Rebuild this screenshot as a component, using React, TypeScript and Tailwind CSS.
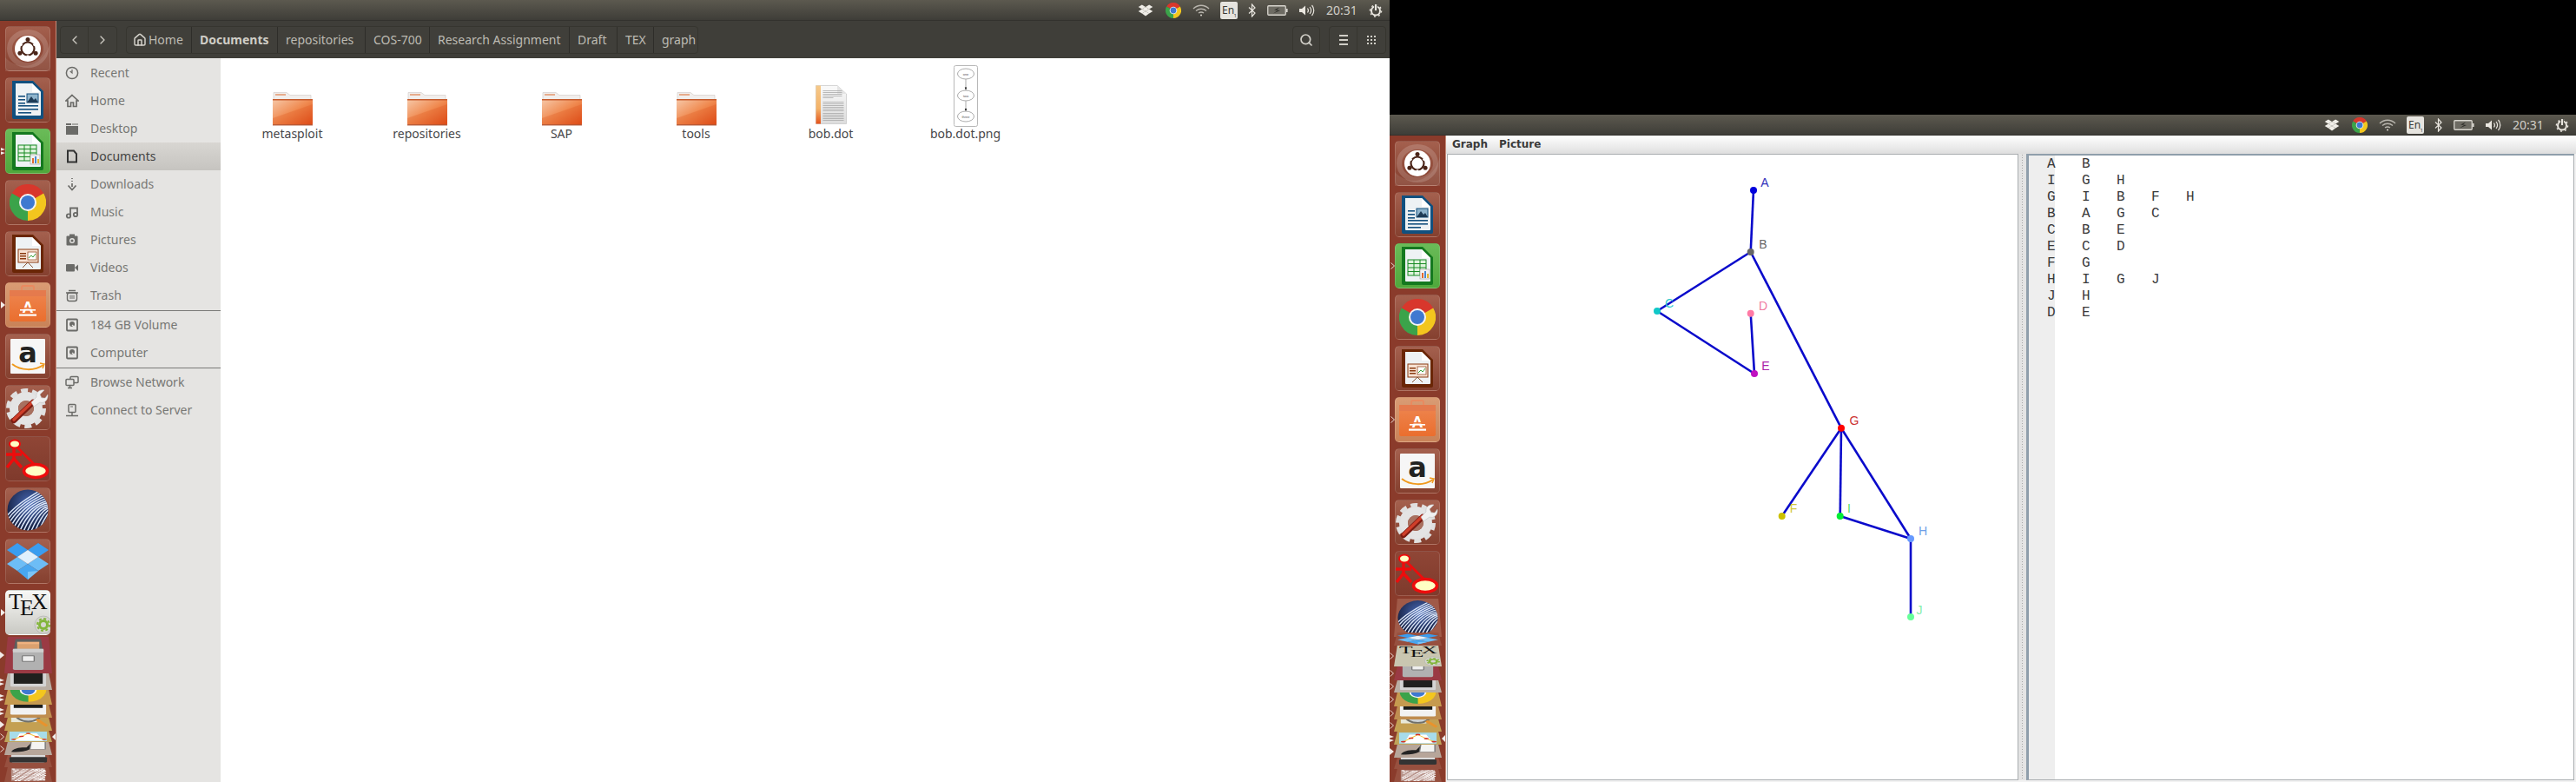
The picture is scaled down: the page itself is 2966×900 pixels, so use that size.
import React from "react";
import { ChevronLeft, ChevronRight, Home, Search } from "lucide-react";

const UI = "font-['Noto_Sans','Open_Sans',sans-serif]";

/* ---------- small shared drawings ---------- */
function ChromeLogo({ size = 42 }: { size?: number }) {
  return (
    <svg width={size} height={size} viewBox="0 0 42 42" className="block">
      <path d="M21 21 L2.8 10.5 A21 21 0 0 1 39.2 10.5Z" fill="#d8372c" />
      <path d="M21 21 L39.2 10.5 A21 21 0 0 1 21 42Z" fill="#f3c61e" />
      <path d="M21 21 L21 42 A21 21 0 0 1 2.8 10.5Z" fill="#3ba34a" />
      <circle cx="21" cy="21" r="10" fill="#f4f4f4" />
      <circle cx="21" cy="21" r="8" fill="#3f79d0" />
    </svg>
  );
}

function Diamonds({ light }: { light?: boolean }) {
  const a = light ? "#f0eee8" : "#3a9df0";
  const b = light ? "#f0eee8" : "#6dbdf6";
  const c = light ? "#f0eee8" : "#48a6f0";
  return (
    <>
      <polygon points="14,5 26,13 14,21 2,13" fill={a} />
      <polygon points="38,5 50,13 38,21 26,13" fill={a} />
      <polygon points="14,21 26,29 14,37 2,29" fill={b} />
      <polygon points="38,21 50,29 38,37 26,29" fill={b} />
      <polygon points="26,13 38,21 26,29 14,21" fill={light ? "#f0eee8" : "#e0f0fd"} />
      <polygon points="14,37 26,29 38,37 26,47" fill={c} />
      {!light && <polygon points="26,38 38,37 26,47" fill="#7cc4f7" />}
    </>
  );
}

/* ---------- launcher icons (52 x 52) ---------- */
type IconP = { className?: string; style?: React.CSSProperties };
const S = ({ children, className, style }: IconP & { children: React.ReactNode }) => (
  <svg viewBox="0 0 52 52" preserveAspectRatio="none" className={className ?? "block h-[52px] w-[52px]"} style={style}>
    {children}
  </svg>
);

function Bfb(p: IconP) {
  return (
    <S {...p}>
      <path d="M0 36 C14 52 44 50 52 18 L52 52 L0 52Z" fill="#fff" opacity=".1" />
      <ellipse cx="26" cy="26" rx="21" ry="19" fill="none" stroke="#fff" strokeOpacity=".16" strokeWidth="6" />
      <circle cx="26" cy="26" r="15" fill="#fff" />
      <circle cx="26" cy="26" r="7.5" fill="none" stroke="#4a2418" strokeWidth="2.2" />
      <path d="M26 26 L26 14 M26 26 L15.6 32 M26 26 L36.4 32" stroke="#fff" strokeWidth="0" />
      <path d="M19.5 22.2 L14 19 M32.5 22.2 L38 19 M26 33.5 L26 39" stroke="#fff" strokeWidth="2.4" />
      <circle cx="26" cy="15.5" r="2.5" fill="#4a2418" />
      <circle cx="16.9" cy="31.3" r="2.5" fill="#4a2418" />
      <circle cx="35.1" cy="31.3" r="2.5" fill="#4a2418" />
    </S>
  );
}

function DocBase({ border, children }: { border: string; children: React.ReactNode }) {
  return (
    <>
      <path d="M8 4 H32 L44 16 V46 a2 2 0 0 1 -2 2 H10 a2 2 0 0 1 -2 -2Z" fill={border} />
      <path d="M12 7 H31 L41 17 V43 a1 1 0 0 1 -1 1 H13 a1 1 0 0 1 -1 -1Z" fill="#eef2f4" />
      <path d="M31 7 L41 17 H31Z" fill="#fff" />
      {children}
    </>
  );
}

function Writer(p: IconP) {
  return (
    <S {...p}>
      <DocBase border="#11507f">
        {[23, 27, 31].map((y) => <rect key={y} x="15" y={y - 2} width="8" height="1.6" fill="#14507e" />)}
        <rect x="25" y="19" width="13" height="10" fill="#8fb4cc" stroke="#14507e" />
        <path d="M25 29 L30 22 L33 26 L35 24 L38 29Z" fill="#1e3b55" />
        {[32, 36, 40].map((y, i) => <rect key={y} x="15" y={y} width={i === 2 ? 15 : 23} height="1.6" fill="#14507e" />)}
      </DocBase>
    </S>
  );
}

function Calc(p: IconP) {
  return (
    <S {...p}>
      <DocBase border="#14791f">
        <rect x="15" y="19" width="21" height="18" fill="#dff3dc" stroke="#178a22" />
        {[23.5, 28, 32.5].map((y) => <line key={y} x1="15" x2="36" y1={y} y2={y} stroke="#178a22" />)}
        {[22, 29].map((x) => <line key={x} x1={x} x2={x} y1="19" y2="37" stroke="#178a22" />)}
        <rect x="29" y="30" width="11" height="11" fill="#f2f2f2" stroke="#999" strokeWidth=".6" />
        <rect x="31" y="34" width="2" height="6" fill="#e06a30" />
        <rect x="34" y="32" width="2" height="8" fill="#4a8ad0" />
        <rect x="37" y="35" width="2" height="5" fill="#e6b830" />
      </DocBase>
    </S>
  );
}

function Impress(p: IconP) {
  return (
    <S {...p}>
      <DocBase border="#6a2606">
        <rect x="15" y="21" width="23" height="15" fill="#f7e3d5" stroke="#8a3a10" />
        {[25, 28, 31].map((y) => <rect key={y} x="17" y={y} width="7" height="1.5" fill="#8a3a10" />)}
        <rect x="26" y="24" width="10" height="9" fill="#fff" stroke="#8a3a10" strokeWidth=".7" />
        <path d="M27 31 L30 28 L32 30 L35 26" stroke="#3aa13a" fill="none" />
        <path d="M26 36 L20 42 M26 36 L32 42" stroke="#8a5a3a" />
      </DocBase>
    </S>
  );
}

function Software(p: IconP) {
  return (
    <S {...p}>
      <defs>
        <linearGradient id="bag" x1="0" x2="0" y1="0" y2="1">
          <stop offset="0" stopColor="#ee8650" />
          <stop offset="1" stopColor="#ea6e2e" />
        </linearGradient>
      </defs>
      <path d="M19 11 V6 a2 2 0 0 1 2 -2 H31 a2 2 0 0 1 2 2 V11" fill="none" stroke="#e98a60" strokeWidth="2" />
      <rect x="5" y="9" width="42" height="36" rx="2" fill="url(#bag)" />
      <rect x="5" y="9" width="42" height="7" fill="#e57a4d" />
      <text x="26" y="35" textAnchor="middle" fontFamily="Liberation Sans" fontWeight="700" fontSize="18" fill="#fff">A</text>
      <rect x="17" y="29" width="18" height="1.6" fill="#ee7a3c" />
      <rect x="17" y="31" width="18" height="1.6" fill="#fff" />
      <rect x="16" y="36.5" width="20" height="2.2" fill="#fff" />
    </S>
  );
}

function Amazon(p: IconP) {
  return (
    <S {...p}>
      <rect x="6" y="6" width="40" height="40" rx="1" fill="#f6f6f6" />
      <text x="26" y="33" textAnchor="middle" fontFamily="DejaVu Sans" fontWeight="700" fontSize="32" fill="#222">a</text>
      <path d="M8 35 C18 43 34 43 44 36" fill="none" stroke="#f09a1e" strokeWidth="2" />
      <path d="M40 34 L45 35 L43 40" fill="none" stroke="#f09a1e" strokeWidth="1.5" />
    </S>
  );
}

function Settings(p: IconP) {
  return (
    <S {...p}>
      <circle cx="24" cy="27" r="14" fill="none" stroke="#e4e4e4" strokeWidth="10" />
      <circle cx="24" cy="27" r="20.5" fill="none" stroke="#e0e0e0" strokeWidth="5" strokeDasharray="8 4.88" />
      <circle cx="24" cy="27" r="9" fill="#a8705f" />
      <line x1="10" y1="41" x2="32" y2="20" stroke="#7d1c12" strokeWidth="6.5" strokeLinecap="round" />
      <line x1="10" y1="40" x2="32" y2="19" stroke="#cf3f2a" strokeWidth="3.5" strokeLinecap="round" />
      <path d="M30 20 L36 14 C35 9 39 5 45 6 L40 11 L42 15 L46 15 L49 11 C50 17 45 22 40 20 L33 25Z" fill="#f0f0f0" stroke="#bbb" strokeWidth=".5" />
    </S>
  );
}

function Uml(p: IconP) {
  return (
    <S {...p}>
      <line x1="14" y1="13" x2="34" y2="33" stroke="#ee0c0c" strokeWidth="2.6" />
      <line x1="10" y1="14" x2="10" y2="27" stroke="#ee0c0c" strokeWidth="3.5" />
      <line x1="1" y1="21" x2="19" y2="21" stroke="#ee0c0c" strokeWidth="3.5" />
      <path d="M2 36 L10 26 L19 36" fill="none" stroke="#ee0c0c" strokeWidth="3.5" />
      <ellipse cx="11" cy="9" rx="6" ry="4.5" fill="#ffffc4" stroke="#ee0c0c" strokeWidth="2" />
      <ellipse cx="35" cy="40" rx="13.5" ry="7.5" fill="#ffffc4" stroke="#ee0c0c" strokeWidth="3.5" />
    </S>
  );
}

function Globe(p: IconP) {
  const arcs = Array.from({ length: 16 }, (_, i) => i);
  return (
    <S {...p}>
      <defs>
        <radialGradient id="gl" cx=".55" cy=".35" r=".75">
          <stop offset="0" stopColor="#4a6ab6" />
          <stop offset="1" stopColor="#0a1028" />
        </radialGradient>
        <clipPath id="gc"><circle cx="26" cy="26" r="23.5" /></clipPath>
      </defs>
      <circle cx="26" cy="26" r="23.5" fill="url(#gl)" />
      <g clipPath="url(#gc)" fill="none" stroke="#dbe6f8" strokeWidth="1.5">
        {arcs.map((i) => (
          <path key={i} d={`M${-12 + i * 4.4} 56 C${-2 + i * 4.4} 30 ${18 + i * 3.6} 14 ${62} ${-8 + i * 4.2}`} />
        ))}
      </g>
    </S>
  );
}

function Dropbox(p: IconP) {
  return <S {...p}><Diamonds /></S>;
}

function Tex(p: IconP) {
  return (
    <S {...p}>
      <text x="4" y="22" fontFamily="Liberation Serif" fontSize="26" fill="#111">T</text>
      <text x="17" y="29" fontFamily="Liberation Serif" fontSize="26" fill="#111">E</text>
      <text x="30" y="22" fontFamily="Liberation Serif" fontSize="26" fill="#111">X</text>
      <circle cx="44" cy="40" r="10" fill="#d6d6d0" stroke="#aaa" strokeWidth=".6" />
      <circle cx="44" cy="40" r="4.5" fill="none" stroke="#82b53a" strokeWidth="3" />
      <circle cx="44" cy="40" r="7" fill="none" stroke="#82b53a" strokeWidth="2" strokeDasharray="3 2.5" />
    </S>
  );
}

function Files(p: IconP) {
  return (
    <S {...p}>
      <path d="M11 3 H41 L43 19 H9Z" fill="#5d5d5d" />
      <rect x="13" y="7" width="26" height="4" fill="#f0b27f" />
      <rect x="13" y="11" width="26" height="7" fill="#dba06e" />
      <rect x="8" y="17" width="36" height="30" rx="2" fill="#b1b1b1" />
      <path d="M8 17 H44 V22 H8Z" fill="#cfcfcf" />
      <rect x="19" y="27" width="14" height="8" rx="1" fill="#eee" stroke="#777" strokeWidth="1.4" />
    </S>
  );
}

function Terminal(p: IconP) {
  return (
    <S {...p}>
      <rect x="5" y="5" width="42" height="42" rx="2" fill="#d4d4d4" />
      <rect x="9" y="8" width="34" height="34" fill="#20201e" />
      <path d="M12 12 L17 15 L12 18" stroke="#eee" fill="none" strokeWidth="1.4" />
      <line x1="19" y1="18" x2="26" y2="18" stroke="#eee" strokeWidth="1.4" />
    </S>
  );
}

function Rhythm(p: IconP) {
  return (
    <S {...p}>
      <rect x="5" y="14" width="42" height="32" rx="2" fill="#f2f2f2" />
      <rect x="9" y="18" width="34" height="16" fill="#1d1d1b" />
    </S>
  );
}

function Magnifier(p: IconP) {
  return (
    <S {...p}>
      <rect x="6" y="8" width="30" height="28" fill="#e8e8d8" />
      <circle cx="26" cy="20" r="15" fill="#cdd2d4" stroke="#70706a" strokeWidth="3" />
      <line x1="36" y1="31" x2="48" y2="43" stroke="#e8932d" strokeWidth="4" />
    </S>
  );
}

function GraphIcon(p: IconP) {
  return (
    <S {...p}>
      <rect x="4" y="4" width="44" height="44" fill="#a7dcea" />
      <path d="M10 46 L16 12 L36 12 L44 46Z" fill="#fff" />
      <path d="M9 40 L18 26 L26 12 L36 28 L45 40" stroke="#f2c33a" strokeWidth="2" fill="none" />
      {[[9, 40], [18, 26], [26, 12], [36, 28], [45, 40]].map(([x, y]) => (
        <circle key={x} cx={x} cy={y} r="3" fill="#d83023" />
      ))}
    </S>
  );
}

function Paint(p: IconP) {
  return (
    <S {...p}>
      <path d="M6 44 C10 34 18 34 24 34 L38 6 L40 8 L28 38 C22 44 12 46 6 44Z" fill="#242424" />
      <path d="M30 14 H46 V38 H28Z" fill="#f4f4f2" stroke="#777" strokeWidth="1.4" />
    </S>
  );
}

function Grey(p: IconP) {
  return (
    <S {...p}>
      <rect x="6" y="8" width="40" height="34" rx="3" fill="#dcdcdc" />
      <rect x="4" y="30" width="44" height="12" rx="2" fill="#333" />
    </S>
  );
}

function Noise(p: IconP) {
  const bits = Array.from({ length: 90 }, (_, i) => i);
  return (
    <S {...p}>
      <rect x="6" y="4" width="40" height="44" fill="#cfc7c4" opacity=".55" />
      {bits.map((i) => (
        <rect key={i} x={7 + ((i * 37) % 38)} y={5 + ((i * 23) % 42)} width="3" height="3" fill="#fff" />
      ))}
    </S>
  );
}

/* ---------- launcher parts ---------- */
type Pip = "solid" | "outline" | "double" | undefined;

function PipMark({ pip }: { pip: Pip }) {
  if (!pip) return null;
  return (
    <svg width="6" height="10" viewBox="0 0 6 10" className="absolute left-[-6px] top-1/2 -translate-y-1/2">
      {pip === "solid" && <path d="M0 1 L5 5 L0 9Z" fill="#f2ece8" />}
      {pip === "outline" && <path d="M0.5 1.5 L4.5 5 L0.5 8.5" fill="none" stroke="#e8d8d0" strokeWidth="1" />}
      {pip === "double" && (
        <>
          <path d="M0 1 L5 3 L0 4.4Z" fill="#f2ece8" />
          <path d="M0 5.6 L5 7 L0 9Z" fill="#f2ece8" />
        </>
      )}
    </svg>
  );
}

function Tile({ children, pip, className }: { children: React.ReactNode; pip?: Pip; className?: string }) {
  return (
    <div className={"relative ml-[6px] h-[52px] w-[52px] rounded-[5px] border border-[#ffffff22] " + (className ?? "bg-[linear-gradient(#a4604e,#85402f)]")}>
      <PipMark pip={pip} />
      <div className="-m-px">{children}</div>
    </div>
  );
}

function Fold({
  h, frac = 1, bg, pip, active, Icon, lift = 0,
}: {
  h: number; frac?: number; bg: string; pip?: Pip; active?: boolean; Icon: (p: IconP) => React.ReactNode; lift?: number;
}) {
  const svgH = h / frac;
  return (
    <div className="relative ml-[5px] w-[55px]" style={{ height: h, marginTop: lift }}>
      <div
        className={"absolute inset-0 overflow-hidden [clip-path:polygon(7%_0,93%_0,100%_100%,0_100%)] " + bg}
      >
        <Icon className="absolute left-[2px] block w-[51px]" style={{ height: svgH, top: h - svgH }} />
      </div>
      <div className="absolute left-[1px] top-1/2 h-0 w-0 -translate-y-1/2"><PipMark pip={pip} /></div>
      {active && <span className="absolute right-[-5px] top-1/2 h-0 w-0 -translate-y-1/2 border-y-[5px] border-r-[5px] border-y-transparent border-r-[#eee]" />}
    </div>
  );
}

const orangeTile = "bg-[linear-gradient(#d99c74,#c98358)]";
const greenTile = "bg-[linear-gradient(#6abb58,#50a83c)]";
const texTile = "bg-[linear-gradient(#f8f8f6,#c9c9c3)] border-[#bdb9a2]";
const umlTile = "bg-[linear-gradient(#8f4636,#7f3a2c)]";

function UpperTiles({ pips, short }: { pips: Record<string, Pip>; short?: boolean }) {
  return (
    <div className="flex flex-col gap-[7px]">
      <Tile><Bfb /></Tile>
      <Tile><Writer /></Tile>
      <Tile pip={pips.calc} className={greenTile}><Calc /></Tile>
      <Tile><ChromeTile /></Tile>
      <Tile><Impress /></Tile>
      <Tile pip={pips.soft} className={orangeTile}><Software /></Tile>
      <Tile><Amazon /></Tile>
      <Tile><Settings /></Tile>
      <Tile className={umlTile}><Uml /></Tile>
      {!short && <Tile><Globe /></Tile>}
      {!short && <Tile><Dropbox /></Tile>}
      {!short && <Tile pip="solid" className={texTile}><Tex /></Tile>}
    </div>
  );
}

function ChromeTile() {
  return <div className="flex h-[52px] w-[52px] items-center justify-center"><ChromeLogo /></div>;
}
const ChromeFold = (p: IconP) => (
  <svg viewBox="0 0 52 52" preserveAspectRatio="none" className={p.className} style={p.style}>
    <path d="M26 26 L7.8 15.5 A21 21 0 0 1 44.2 15.5Z" fill="#d8372c" />
    <path d="M26 26 L44.2 15.5 A21 21 0 0 1 26 47Z" fill="#f3c61e" />
    <path d="M26 26 L26 47 A21 21 0 0 1 7.8 15.5Z" fill="#3ba34a" />
    <circle cx="26" cy="26" r="10" fill="#f4f4f4" />
    <circle cx="26" cy="26" r="8" fill="#3f79d0" />
  </svg>
);

const maroon = "bg-[#9a3a44]";
const tan = "bg-[#b9aea3]";
const gold = "bg-[#c69a4f]";
const gold2 = "bg-[#bf8d50]";
const gold3 = "bg-[#c4a052]";
const gold4 = "bg-[#bfa35a]";
const taupe = "bg-[#b7a69a]";
const dull = "bg-[#97503f]";

function LeftDock() {
  return (
    <aside className="flex h-full w-[65px] shrink-0 flex-col overflow-hidden border-r border-[#c78d7b] bg-[#8a3b2b] pt-[6px]">
      <UpperTiles pips={{ calc: "double", soft: "solid" }} />
      <div className="mt-[2px] flex flex-col">
        <Fold h={42} bg={maroon} pip="solid" Icon={Files} />
        <Fold h={19} frac={0.55} bg={tan} pip="double" Icon={Terminal} />
        <Fold h={17} frac={0.5} bg={gold} pip="double" Icon={ChromeFold} />
        <Fold h={15} frac={0.45} bg={gold2} pip="double" Icon={Rhythm} />
        <Fold h={15} frac={0.45} bg={gold3} pip="solid" Icon={Magnifier} />
        <Fold h={13} frac={1} bg={gold4} pip="outline" active Icon={GraphIcon} />
        <Fold h={15} frac={0.6} bg={taupe} pip="outline" Icon={Paint} />
        <Fold h={14} frac={0.5} bg={dull} Icon={Grey} />
        <Fold h={17} frac={1} bg={dull} Icon={Noise} />
      </div>
    </aside>
  );
}

function RightDock() {
  return (
    <aside className="flex h-full w-[65px] shrink-0 flex-col overflow-hidden border-r border-[#c78d7b] bg-[#8a3b2b] pt-[6px]">
      <UpperTiles short pips={{ calc: "outline", soft: "outline" }} />
      <div className="mt-[3px] flex flex-col">
        <Fold h={44} bg="bg-[#a05a48]" Icon={Globe} />
        <Fold h={15} lift={-5} bg="bg-[#97503f]" Icon={Dropbox} />
        <Fold h={24} frac={0.92} bg="bg-[#c9c6b0]" pip="outline" Icon={Tex} />
        <Fold h={16} frac={0.45} bg={maroon} pip="outline" Icon={Files} />
        <Fold h={14} frac={0.45} bg={tan} pip="outline" Icon={Terminal} />
        <Fold h={16} frac={0.5} bg={gold} pip="outline" Icon={ChromeFold} />
        <Fold h={15} frac={0.45} bg={gold2} pip="outline" Icon={Rhythm} />
        <Fold h={14} frac={0.45} bg={gold3} pip="outline" Icon={Magnifier} />
        <Fold h={15} bg={gold4} pip="double" active Icon={GraphIcon} />
        <Fold h={15} frac={0.6} bg={taupe} pip="solid" Icon={Paint} />
        <Fold h={13} frac={0.5} bg={dull} Icon={Grey} />
        <Fold h={15} bg={dull} Icon={Noise} />
      </div>
    </aside>
  );
}

/* ---------- top panel ---------- */
function TopBar() {
  const c = "#e9e6df";
  return (
    <header className={"flex h-[24px] shrink-0 items-center justify-end bg-[linear-gradient(#5c594f,#3d3c37)] pr-[3px] shadow-[inset_0_-1px_0_#33322e] " + UI}>
      <div className="flex w-[32px] justify-center">
        <svg width="18" height="16" viewBox="0 0 52 52" preserveAspectRatio="none"><Diamonds light /></svg>
      </div>
      <div className="flex w-[32px] justify-center"><ChromeLogo size={18} /></div>
      <div className="flex w-[32px] justify-center">
        <svg width="20" height="14" viewBox="0 0 20 14" fill="none" stroke="#b9b6ae" strokeWidth="1.4">
          <path d="M1 5 C6 0 14 0 19 5" />
          <path d="M4 7.5 C7.5 4.5 12.5 4.5 16 7.5" />
          <path d="M7 10 C9 8.7 11 8.7 13 10" />
          <circle cx="10" cy="12.4" r="1" fill="#e0ddd6" stroke="none" />
        </svg>
      </div>
      <div className="flex w-[32px] justify-center">
        <div className="relative flex h-[20px] w-[20px] items-center rounded-[2px] bg-[#e6e4df] pl-[2px] text-[12px] leading-none text-[#3c3b37]">
          En<span className="absolute bottom-[1px] right-[1px] text-[6px]">1</span>
        </div>
      </div>
      <div className="flex w-[20px] justify-center">
        <svg width="9" height="16" viewBox="0 0 9 16" fill="none" stroke={c} strokeWidth="1.2">
          <path d="M1 4.5 L8 11 L4.5 15 V1 L8 5 L1 11.5" />
        </svg>
      </div>
      <div className="flex w-[40px] justify-center">
        <svg width="24" height="12" viewBox="0 0 24 12">
          <rect x=".75" y=".75" width="20.5" height="10.5" rx="1" fill="#6d6b63" stroke="#d8d5ce" strokeWidth="1.3" />
          <rect x="22" y="4" width="1.6" height="4" fill="#d8d5ce" />
          <path d="M14 2.5 L8 5.6 L12 6 L7 9.5 L15 6 L11 5.6Z" fill="#2d2c28" />
        </svg>
      </div>
      <div className="flex w-[28px] justify-center">
        <svg width="20" height="14" viewBox="0 0 20 14" fill="none">
          <path d="M1 5 H4 L8 1.5 V12.5 L4 9 H1Z" fill={c} />
          <path d="M10.5 4.5 C11.6 6 11.6 8 10.5 9.5" stroke={c} strokeWidth="1.2" />
          <path d="M13 3 C15 5.5 15 8.5 13 11" stroke={c} strokeWidth="1.2" />
          <path d="M15.5 1 C18.5 4.5 18.5 9.5 15.5 13" stroke={c} strokeWidth="1.2" />
        </svg>
      </div>
      <div className="flex w-[52px] justify-center text-[14px] leading-none text-[#d2cfc8]">20:31</div>
      <div className="flex w-[26px] justify-center">
        <svg width="16" height="16" viewBox="0 0 16 16" fill="none" stroke={c}>
          <circle cx="8" cy="8.5" r="5" strokeWidth="2" />
          <circle cx="8" cy="8.5" r="6.6" strokeWidth="1.4" strokeDasharray="2 3.18" />
          <rect x="6.6" y="0.5" width="2.8" height="8" fill={c} stroke="#47463f" strokeWidth=".8" />
        </svg>
      </div>
    </header>
  );
}

/* ---------- file manager ---------- */
function Crumb({ w, bold, children, last }: { w: string; bold?: boolean; children: React.ReactNode; last?: boolean }) {
  return (
    <div className={"flex h-full items-center pl-[9px] text-[14px] " + w + (last ? "" : " border-r border-[#2e2d29]") + (bold ? " font-bold text-[#cfcdc6]" : " text-[#bdbbb3]")}>
      {children}
    </div>
  );
}

const barBtn = "flex h-[32px] items-center rounded-[4px] border border-[#36352f] bg-[#403f3a]";

function Toolbar() {
  return (
    <div className={"flex h-[43px] shrink-0 items-center bg-[#3f3e39] pl-[4px] pr-[4px] " + UI}>
      <div className={barBtn + " w-[66px]"}>
        <div className="flex h-full w-[33px] items-center justify-center border-r border-[#36352f]"><ChevronLeft size={16} strokeWidth={2} color="#c9c7c0" /></div>
        <div className="flex h-full w-[33px] items-center justify-center"><ChevronRight size={16} strokeWidth={2} color="#c9c7c0" /></div>
      </div>
      <div className={barBtn + " ml-[10px]"}>
        <div className="flex h-full w-[75px] items-center gap-[2px] border-r border-[#2e2d29] pl-[7px] text-[14px] text-[#bdbbb3]">
          <Home size={16} strokeWidth={2.2} color="#d6d4cd" />Home
        </div>
        <Crumb w="w-[99px]" bold>Documents</Crumb>
        <Crumb w="w-[101px]">repositories</Crumb>
        <Crumb w="w-[74px]">COS-700</Crumb>
        <Crumb w="w-[161px]">Research Assignment</Crumb>
        <Crumb w="w-[55px]">Draft</Crumb>
        <Crumb w="w-[42px]">TEX</Crumb>
        <Crumb w="w-[50px]" last>graph</Crumb>
      </div>
      <div className="flex-1" />
      <div className={barBtn + " w-[32px] justify-center"}>
        <Search size={16} strokeWidth={2.6} color="#d0cec7" />
      </div>
      <div className={barBtn + " ml-[10px] w-[66px]"}>
        <div className="flex h-full w-[33px] flex-col items-center justify-center gap-[3px] border-r border-[#36352f]">
          <span className="h-[2px] w-[10px] bg-[#d0cec7]" /><span className="h-[2px] w-[10px] bg-[#d0cec7]" /><span className="h-[2px] w-[10px] bg-[#d0cec7]" />
        </div>
        <div className="flex h-full w-[33px] items-center justify-center">
          <div className="grid grid-cols-3 gap-[2px]">
            {Array.from({ length: 9 }, (_, i) => <span key={i} className="h-[2px] w-[2px] bg-[#d0cec7]" />)}
          </div>
        </div>
      </div>
    </div>
  );
}

const sb = "#6b6b68";
const sidebarIcons: Record<string, React.ReactNode> = {
  Recent: <><circle cx="8" cy="8" r="6.6" fill="none" stroke={sb} strokeWidth="1.5" /><path d="M8 4 V8 L5.8 6" fill="none" stroke={sb} strokeWidth="1.2" /></>,
  Home: <path d="M8 1.5 L15 8 H13 V14.5 H9.5 V10 H6.5 V14.5 H3 V8 H1Z" fill="none" stroke={sb} strokeWidth="1.7" />,
  Desktop: <><path d="M1 2 H7 V4 H1Z" fill={sb} /><rect x="1" y="5" width="14" height="10" fill={sb} /><rect x="8" y="2" width="7" height="2" fill={sb} opacity=".5" /></>,
  Documents: <path d="M3 1.5 H10 L13 5 V14.5 H3Z" fill="none" stroke="#333" strokeWidth="2" />,
  Downloads: <><path d="M8 1 V2 M8 4 V5 M8 7 V11" stroke={sb} strokeWidth="1.7" /><path d="M3.5 9.5 L8 14.5 L12.5 9.5" fill="none" stroke={sb} strokeWidth="1.7" /></>,
  Music: <><circle cx="4" cy="12.5" r="2.2" fill="none" stroke={sb} strokeWidth="1.8" /><circle cx="12" cy="11" r="2.2" fill="none" stroke={sb} strokeWidth="1.8" /><path d="M6 12.5 V3.5 H14 V11" fill="none" stroke={sb} strokeWidth="1.8" /></>,
  Pictures: <><rect x="1.5" y="3.5" width="13" height="11" rx="1" fill={sb} /><rect x="5" y="1.5" width="6" height="3" fill={sb} /><circle cx="8" cy="9" r="3" fill="#e5e4e2" /><circle cx="8" cy="9" r="1.6" fill={sb} /></>,
  Videos: <><rect x="1" y="4" width="10" height="8.5" rx="1" fill={sb} /><path d="M11 8 L15 4.5 V12Z" fill={sb} /></>,
  Trash: <><rect x="2.5" y="5" width="11" height="9.5" rx="2.5" fill="none" stroke={sb} strokeWidth="1.4" /><path d="M1 5 H15 M4 2.5 H12" stroke={sb} strokeWidth="1.4" /><path d="M6 7.5 V12 M8 7.5 V12 M10 7.5 V12" stroke={sb} /></>,
  Disk: <><rect x="2" y="1.5" width="12" height="13" rx="1" fill="none" stroke={sb} strokeWidth="1.8" /><circle cx="8" cy="7" r="3" fill={sb} /><path d="M8 8 L12 12" stroke="#e5e4e2" strokeWidth="1.2" /></>,
  Browse: <><rect x="6" y="1.5" width="9" height="7" rx="1" fill="none" stroke={sb} strokeWidth="1.5" /><rect x="1" y="4.5" width="9" height="7" rx="1" fill="#e5e4e2" stroke={sb} strokeWidth="1.5" /><path d="M3 14.5 H8 M5.5 12 V14" stroke={sb} strokeWidth="1.6" /></>,
  Server: <><rect x="4" y="1.5" width="8" height="9" rx="1" fill="none" stroke={sb} strokeWidth="1.5" /><path d="M6 4 H9" stroke={sb} /><path d="M8 11 V14 M1 14.5 H15" stroke={sb} strokeWidth="1.5" /></>,
};

function Place({ icon, label, selected }: { icon: string; label: string; selected?: boolean }) {
  return (
    <div className={"flex h-[32px] items-center pl-[10px] text-[14px] " + (selected ? "bg-[linear-gradient(#d8d6d2,#c6c4c0)] text-[#444]" : "text-[#777774]")}>
      <svg width="16" height="16" viewBox="0 0 16 16" className="shrink-0">{sidebarIcons[icon]}</svg>
      <span className="relative -top-px ml-[13px]">{label}</span>
    </div>
  );
}

function Sidebar() {
  return (
    <nav className={"w-[189px] shrink-0 bg-[#e5e4e2] pt-px " + UI}>
      <Place icon="Recent" label="Recent" />
      <Place icon="Home" label="Home" />
      <Place icon="Desktop" label="Desktop" />
      <Place icon="Documents" label="Documents" selected />
      <Place icon="Downloads" label="Downloads" />
      <Place icon="Music" label="Music" />
      <Place icon="Pictures" label="Pictures" />
      <Place icon="Videos" label="Videos" />
      <Place icon="Trash" label="Trash" />
      <div className="mt-px h-px bg-[#7a7a78]" />
      <Place icon="Disk" label="184 GB Volume" />
      <Place icon="Disk" label="Computer" />
      <div className="mt-px h-px bg-[#7a7a78]" />
      <Place icon="Browse" label="Browse Network" />
      <Place icon="Server" label="Connect to Server" />
    </nav>
  );
}

function FolderIcon({ id }: { id: string }) {
  return (
    <svg width="48" height="40" viewBox="0 0 48 40" className="block">
      <defs>
        <linearGradient id={id} x1="0" x2="1" y1="0" y2="1">
          <stop offset="0" stopColor="#f6c8a8" />
          <stop offset=".5" stopColor="#f08a50" />
          <stop offset="1" stopColor="#dd4513" />
        </linearGradient>
      </defs>
      <path d="M2 0.5 H17 L21 3.5 H45 V12 H2Z" fill="#f1eeec" stroke="#d4cfcc" strokeWidth=".7" />
      <rect x="4" y="2" width="12" height="2" fill="#e7ab8b" />
      <rect x="1" y="8" width="46" height="29.5" rx="1" fill={`url(#${id})`} />
      <path d="M1 8 H47 V9.5 H1Z" fill="#c75b2c" />
      <path d="M1 37 H47 V38.5 H1Z" fill="#a63c15" opacity=".75" />
      <path d="M1 30 L47 14 V37 H1Z" fill="#de5a22" opacity=".3" />
    </svg>
  );
}

function DocFile() {
  const lines = [6, 8, 10, 12, 14, 19, 21, 23, 25, 27, 29, 32, 34, 36, 38, 40];
  return (
    <svg width="36" height="45" viewBox="0 0 36 45" className="mb-[3px] block">
      <defs>
        <linearGradient id="pg" x1="0" x2="0" y1="0" y2="1"><stop offset="0" stopColor="#fafafa" /><stop offset="1" stopColor="#dcdcdc" /></linearGradient>
        <linearGradient id="st" x1="0" x2="0" y1="0" y2="1"><stop offset="0" stopColor="#f6c98a" /><stop offset=".6" stopColor="#f4b267" /><stop offset="1" stopColor="#e4531b" /></linearGradient>
      </defs>
      <path d="M0.5 0.5 H25 L35.5 10 V44.5 H0.5Z" fill="url(#pg)" stroke="#c4c4c4" strokeWidth=".7" />
      <rect x="0.5" y="0.5" width="5.5" height="44" fill="url(#st)" />
      <path d="M25 0.5 L35.5 10 H25Z" fill="#e4e4e4" />
      {lines.map((y, i) => <rect key={y} x="8.5" y={y} width={i === 4 ? 12 : y < 15 ? 22 : 24} height=".8" fill="#a9a9a9" />)}
    </svg>
  );
}

function DotThumb() {
  const labels = [["one", 10], ["two", 35], ["three", 59]] as const;
  return (
    <svg width="28" height="71" viewBox="0 0 28 71" className="block">
      <rect x=".5" y=".5" width="27" height="70" rx="2" fill="#fff" stroke="#b8b8b8" />
      {labels.map(([t, y]) => (
        <g key={t}>
          <ellipse cx="14" cy={y} rx="9.5" ry="6" fill="none" stroke="#888" strokeWidth=".7" />
          <text x="14" y={y + 1.5} textAnchor="middle" fontSize="4" fill="#555" fontFamily="Liberation Sans">{t}</text>
        </g>
      ))}
      <path d="M14 16 V29 M14 41 V53" stroke="#aaa" />
      <path d="M12.8 25.5 H15.2 L14 28.5Z M12.8 50 H15.2 L14 53Z" fill="#111" />
    </svg>
  );
}

function FileItem({ label, children }: { label: string; children: React.ReactNode }) {
  return (
    <div className="flex w-[155px] flex-col items-center">
      <div className="flex h-[71px] items-end justify-center">{children}</div>
      <div className="-mt-[2px] text-[14px] leading-[19px] text-[#47474a]">{label}</div>
    </div>
  );
}

function Nautilus() {
  return (
    <div className="flex min-h-0 flex-1 flex-col">
      <Toolbar />
      <div className="flex min-h-0 flex-1">
        <Sidebar />
        <main className={"flex flex-1 items-start bg-white pl-[5px] pt-[8px] " + UI}>
          <FileItem label="metasploit"><FolderIcon id="f1" /></FileItem>
          <FileItem label="repositories"><FolderIcon id="f2" /></FileItem>
          <FileItem label="SAP"><FolderIcon id="f3" /></FileItem>
          <FileItem label="tools"><FolderIcon id="f4" /></FileItem>
          <FileItem label="bob.dot"><DocFile /></FileItem>
          <FileItem label="bob.dot.png"><DotThumb /></FileItem>
        </main>
      </div>
    </div>
  );
}

/* ---------- graph application ---------- */
const nodes = {
  A: { x: 2019, y: 219, lx: 2032, ly: 210, dot: "#0000dd", text: "#3333bb" },
  B: { x: 2015.7, y: 290, lx: 2030, ly: 281, dot: "#666666", text: "#666666" },
  C: { x: 1908, y: 358, lx: 1922, ly: 349, dot: "#10c8c8", text: "#33cccc" },
  D: { x: 2015.7, y: 360.7, lx: 2030, ly: 352, dot: "#ff7aa5", text: "#f07aa0" },
  E: { x: 2020, y: 430, lx: 2033, ly: 421, dot: "#c010c0", text: "#aa22aa" },
  F: { x: 2051.7, y: 594, lx: 2065, ly: 585, dot: "#ccc000", text: "#d4c83a" },
  G: { x: 2120, y: 492.7, lx: 2135, ly: 484, dot: "#ff0000", text: "#cc3333" },
  H: { x: 2200, y: 620, lx: 2214, ly: 611, dot: "#6699ff", text: "#6f9fe8" },
  I: { x: 2118.7, y: 594, lx: 2129, ly: 585, dot: "#00ee33", text: "#55dd66" },
  J: { x: 2200, y: 710, lx: 2210, ly: 702, dot: "#66ff99", text: "#88eeaa" },
};
type N = keyof typeof nodes;
const edges: [N, N][] = [["A", "B"], ["B", "C"], ["B", "G"], ["C", "E"], ["E", "D"], ["G", "F"], ["G", "I"], ["G", "H"], ["I", "H"], ["H", "J"]];

function GraphCanvas() {
  return (
    <div className="min-w-0 w-[658px] shrink-0 border border-[#a9adb0] bg-white">
      <svg viewBox="1667 178 656 719" className="block h-full w-full">
        {edges.map(([a, b]) => (
          <line key={a + b} x1={nodes[a].x} y1={nodes[a].y} x2={nodes[b].x} y2={nodes[b].y} stroke="#0a0acb" strokeWidth="2.6" />
        ))}
        {(Object.keys(nodes) as N[]).map((k) => (
          <g key={k}>
            <circle cx={nodes[k].x} cy={nodes[k].y} r="4" fill={nodes[k].dot} />
            <text x={nodes[k].lx} y={nodes[k].ly + 5} textAnchor="middle" fontFamily="Liberation Sans" fontSize="14" fill={nodes[k].text}>{k}</text>
          </g>
        ))}
      </svg>
    </div>
  );
}

const rows = [
  ["A", "B"],
  ["I", "G", "H"],
  ["G", "I", "B", "F", "H"],
  ["B", "A", "G", "C"],
  ["C", "B", "E"],
  ["E", "C", "D"],
  ["F", "G"],
  ["H", "I", "G", "J"],
  ["J", "H"],
  ["D", "E"],
];

function Adjacency() {
  return (
    <div className="relative mr-[2px] min-w-0 flex-1 border-l-[3px] border-r border-t-2 border-b border-[#8f9eab] border-r-[#a9adb0] border-b-[#a9adb0] bg-white">
      <div className="absolute inset-y-0 left-0 w-[30px] bg-[#eeeeee]" />
      <div className="relative pl-[21px] pt-px font-['Liberation_Mono',monospace] text-[16px] leading-[19px] text-[#3a3a3a]">
        {rows.map((r, i) => (
          <div key={i} className="flex h-[19px]">
            {r.map((c, j) => <span key={j} className="w-[40px]">{c}</span>)}
          </div>
        ))}
      </div>
    </div>
  );
}

function GraphApp() {
  return (
    <div className="flex min-w-0 flex-1 flex-col bg-[#f2f2f2]">
      <div className="flex h-[21px] shrink-0 items-center gap-[13px] bg-[linear-gradient(#ffffff,#dedede)] pb-[2px] pl-[7px] font-['DejaVu_Sans',sans-serif] text-[12px] font-bold leading-none text-[#3a3a3a]">
        <span>Graph</span>
        <span>Picture</span>
      </div>
      <div className="flex min-h-0 flex-1 pb-[2px] pl-px">
        <GraphCanvas />
        <div className="flex w-[9px] shrink-0 justify-center bg-[#e4e4e4]">
          <div className="w-[4px] bg-[radial-gradient(#a8a8a8_1px,transparent_1px)] bg-[length:3px_3px]" />
        </div>
        <Adjacency />
      </div>
    </div>
  );
}

export default function App() {
  return (
    <div className="flex h-[900px] w-[2966px] overflow-hidden bg-black">
      <section className="flex h-[900px] w-[1600px] shrink-0 flex-col">
        <TopBar />
        <div className="flex min-h-0 flex-1">
          <LeftDock />
          <Nautilus />
        </div>
      </section>
      <section className="flex h-[900px] w-[1366px] shrink-0 flex-col pt-[132px]">
        <TopBar />
        <div className="flex min-h-0 flex-1">
          <RightDock />
          <GraphApp />
        </div>
      </section>
    </div>
  );
}
